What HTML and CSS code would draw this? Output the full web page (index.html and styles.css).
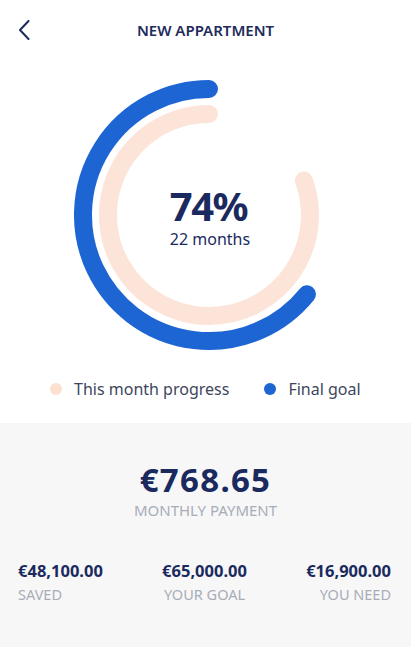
FILE: index.html
```html
<!DOCTYPE html>
<html>
<head>
<meta charset="utf-8">
<link rel="stylesheet" href="styles.css">
</head>
<body>
<div class="app">
  <header class="topbar">
    <svg class="back" width="12" height="20" viewBox="0 0 12 20"><path d="M10.5 1 L2 10 L10.5 19" fill="none" stroke="#1e2b5c" stroke-width="2" stroke-linecap="round" stroke-linejoin="round"/></svg>
    <h1 class="title">NEW APPARTMENT</h1>
  </header>
  <section class="chart">
    <svg class="rings" width="411" height="290" viewBox="-209 -145 411 290">
      <path d="M 0 -126 A 126 126 0 1 0 97.9 79.3" fill="none" stroke="#1e65d4" stroke-width="18" stroke-linecap="round"/>
      <path d="M 0 -101 A 101 101 0 1 0 94.9 -34.5" fill="none" stroke="#fde4d8" stroke-width="18" stroke-linecap="round"/>
    </svg>
    <div class="center">
      <div class="pct">74%</div>
      <div class="months">22 months</div>
    </div>
  </section>
  <div class="legend">
    <span class="item"><span class="dot peach"></span>This month progress</span>
    <span class="item"><span class="dot blue"></span>Final goal</span>
  </div>
  <section class="summary">
    <div class="main">
      <div class="amount">€768.65</div>
      <div class="label">MONTHLY PAYMENT</div>
    </div>
    <div class="stats">
      <div class="stat left">
        <div class="val">€48,100.00</div>
        <div class="lab">SAVED</div>
      </div>
      <div class="stat mid">
        <div class="val">€65,000.00</div>
        <div class="lab">YOUR GOAL</div>
      </div>
      <div class="stat right">
        <div class="val">€16,900.00</div>
        <div class="lab">YOU NEED</div>
      </div>
    </div>
  </section>
</div>
</body>
</html>
```
FILE: styles.css
```css
* { box-sizing: border-box; margin: 0; padding: 0; }
html, body { width: 411px; height: 647px; overflow: hidden; background: #fff; }
body { font-family: "Noto Sans", "Open Sans", sans-serif; color: #1e2b5c; }
.app { display: flex; flex-direction: column; height: 647px; }
.topbar { height: 60px; display: grid; grid-template-columns: 1fr; align-items: center; }
.back { grid-area: 1 / 1; margin-left: 18px; margin-top: -1px; }
.title { grid-area: 1 / 1; justify-self: center; font-size: 15px; font-weight: 600; letter-spacing: 0; color: #1e2b5c; }
.chart { display: grid; height: 300px; margin-top: 10px; }
.rings { grid-area: 1 / 1; display: block; }
.center { grid-area: 1 / 1; display: flex; flex-direction: column; align-items: center; padding-top: 113px; padding-left: 6px; }
.pct { font-size: 40px; font-weight: 700; line-height: 46px; letter-spacing: -1.5px; color: #1b2a5e; }
.months { font-size: 16px; line-height: 20px; margin-top: 0; padding-left: 3px; color: #1b2a5e; }
.legend { display: flex; align-items: center; justify-content: flex-start; padding-left: 50px; height: 44px; margin-top: -3px; }
.item { display: flex; align-items: center; font-size: 16px; color: #3d465e; }
.item + .item { margin-left: 35px; }
.dot { width: 12px; height: 12px; border-radius: 50%; margin-right: 12px; }
.dot.peach { background: #fde0d0; }
.dot.blue { background: #1e65d4; }
.summary { flex: 1; background: #f7f7f7; margin-top: 12px; display: flex; flex-direction: column; }
.main { display: flex; flex-direction: column; align-items: center; padding-top: 37px; padding-left: 0; }
.amount { font-size: 33px; font-weight: 700; line-height: 40px; letter-spacing: 1.3px; color: #1b2a5e; }
.label { font-size: 15px; color: #a7adb8; line-height: 18px; margin-top: 1px; }
.stats { display: flex; justify-content: space-between; padding: 0 20px 0 18px; margin-top: 41px; }
.stat { display: flex; flex-direction: column; }
.stat.mid { align-items: center; }
.stat.right { align-items: flex-end; }
.val { font-size: 16.5px; font-weight: 700; line-height: 22px; color: #1b2a5e; }
.lab { font-size: 14.5px; color: #a7adb8; line-height: 18px; margin-top: 3px; }
```
